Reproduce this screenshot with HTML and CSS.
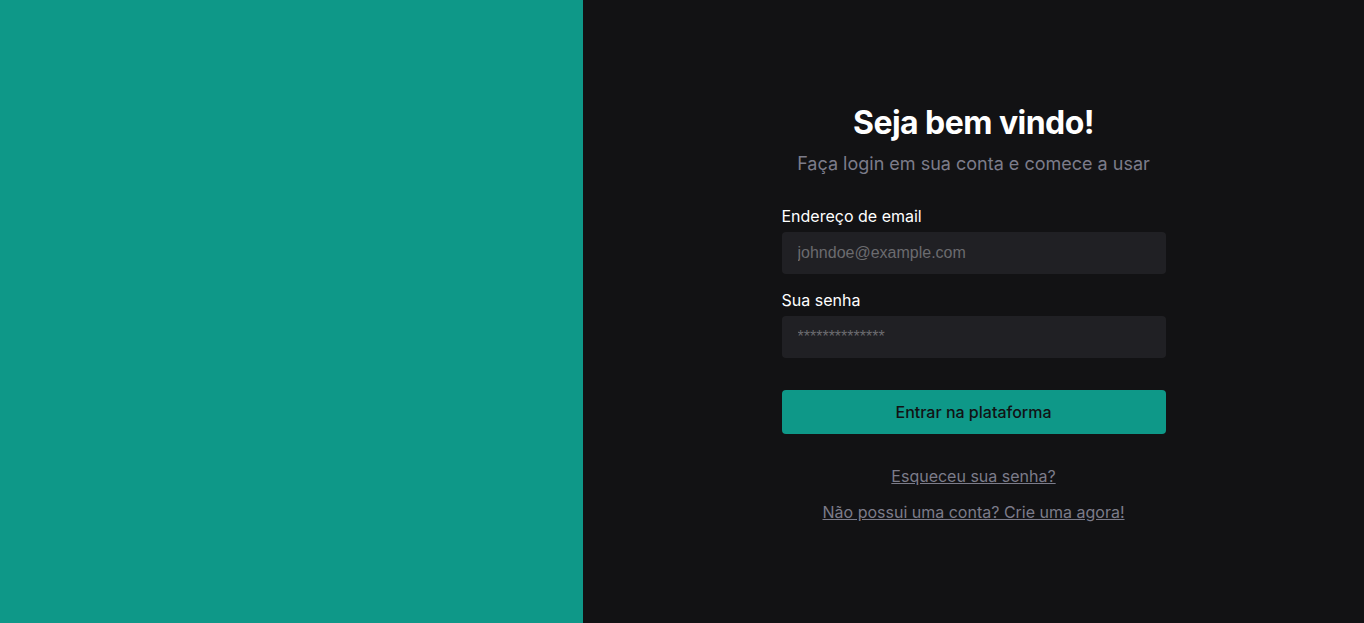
FILE: index.html
```html
<!DOCTYPE html>
<html lang="pt-BR">
<head>
<meta charset="utf-8">
<title>Login</title>
<link rel="stylesheet" href="styles.css">
</head>
<body>
<div class="page">
  <aside class="side"></aside>
  <main class="main">
    <div class="box">
      <h1 class="title">Seja bem vindo!</h1>
      <p class="subtitle">Faça login em sua conta e comece a usar</p>
      <form class="form">
        <label class="field">
          <span class="label">Endereço de email</span>
          <input class="input" type="email" placeholder="johndoe@example.com">
        </label>
        <label class="field">
          <span class="label">Sua senha</span>
          <input class="input" type="password" placeholder="**************">
        </label>
        <button class="button" type="button">Entrar na plataforma</button>
      </form>
      <nav class="links">
        <a href="#" class="link">Esqueceu sua senha?</a>
        <a href="#" class="link">Não possui uma conta? Crie uma agora!</a>
      </nav>
    </div>
  </main>
</div>
</body>
</html>
```
FILE: styles.css
```css
* { box-sizing: border-box; }
html, body { margin: 0; height: 100%; }
body {
  font-family: Inter, "Noto Sans", sans-serif;
  background: #121214;
  color: #ffffff;
}
.page {
  display: flex;
  height: 623px;
}
.side {
  width: 583px;
  flex-shrink: 0;
  background: #0e9888;
}
.main {
  flex: 1;
  display: flex;
  align-items: center;
  justify-content: center;
  background: #121214;
}
.box {
  width: 384px;
  display: flex;
  flex-direction: column;
  align-items: stretch;
  margin-top: 3px;
}
.title {
  margin: 0;
  font-size: 32px;
  line-height: 40px;
  font-weight: 700;
  text-align: center;
  letter-spacing: -0.55px;
}
.subtitle {
  margin: 7px 0 0;
  font-size: 18px;
  line-height: 28px;
  color: #7c7c8a;
  text-align: center;
}
.form {
  margin-top: 26px;
  display: flex;
  flex-direction: column;
  gap: 14px;
}
.field {
  display: flex;
  flex-direction: column;
  gap: 4px;
}
.label {
  font-size: 16px;
  line-height: 24px;
  color: #ffffff;
}
.input {
  height: 42px;
  border: none;
  border-radius: 4px;
  background: #202024;
  padding: 0 16px;
  font-family: "Liberation Sans", Arial, sans-serif;
  font-size: 16px;
  color: #e1e1e6;
  outline: none;
}
.input::placeholder { color: #6b6b6f; }
.button {
  margin-top: 18px;
  height: 44px;
  border: none;
  border-radius: 4px;
  background: #0e9888;
  color: #121214;
  font-family: Inter, sans-serif;
  font-size: 16px;
  font-weight: 500;
  cursor: pointer;
}
.links {
  margin-top: 30px;
  display: flex;
  flex-direction: column;
  align-items: center;
  gap: 12px;
}
.link {
  font-size: 16px;
  line-height: 24px;
  color: #7c7c8a;
  text-decoration: underline;
}
```
